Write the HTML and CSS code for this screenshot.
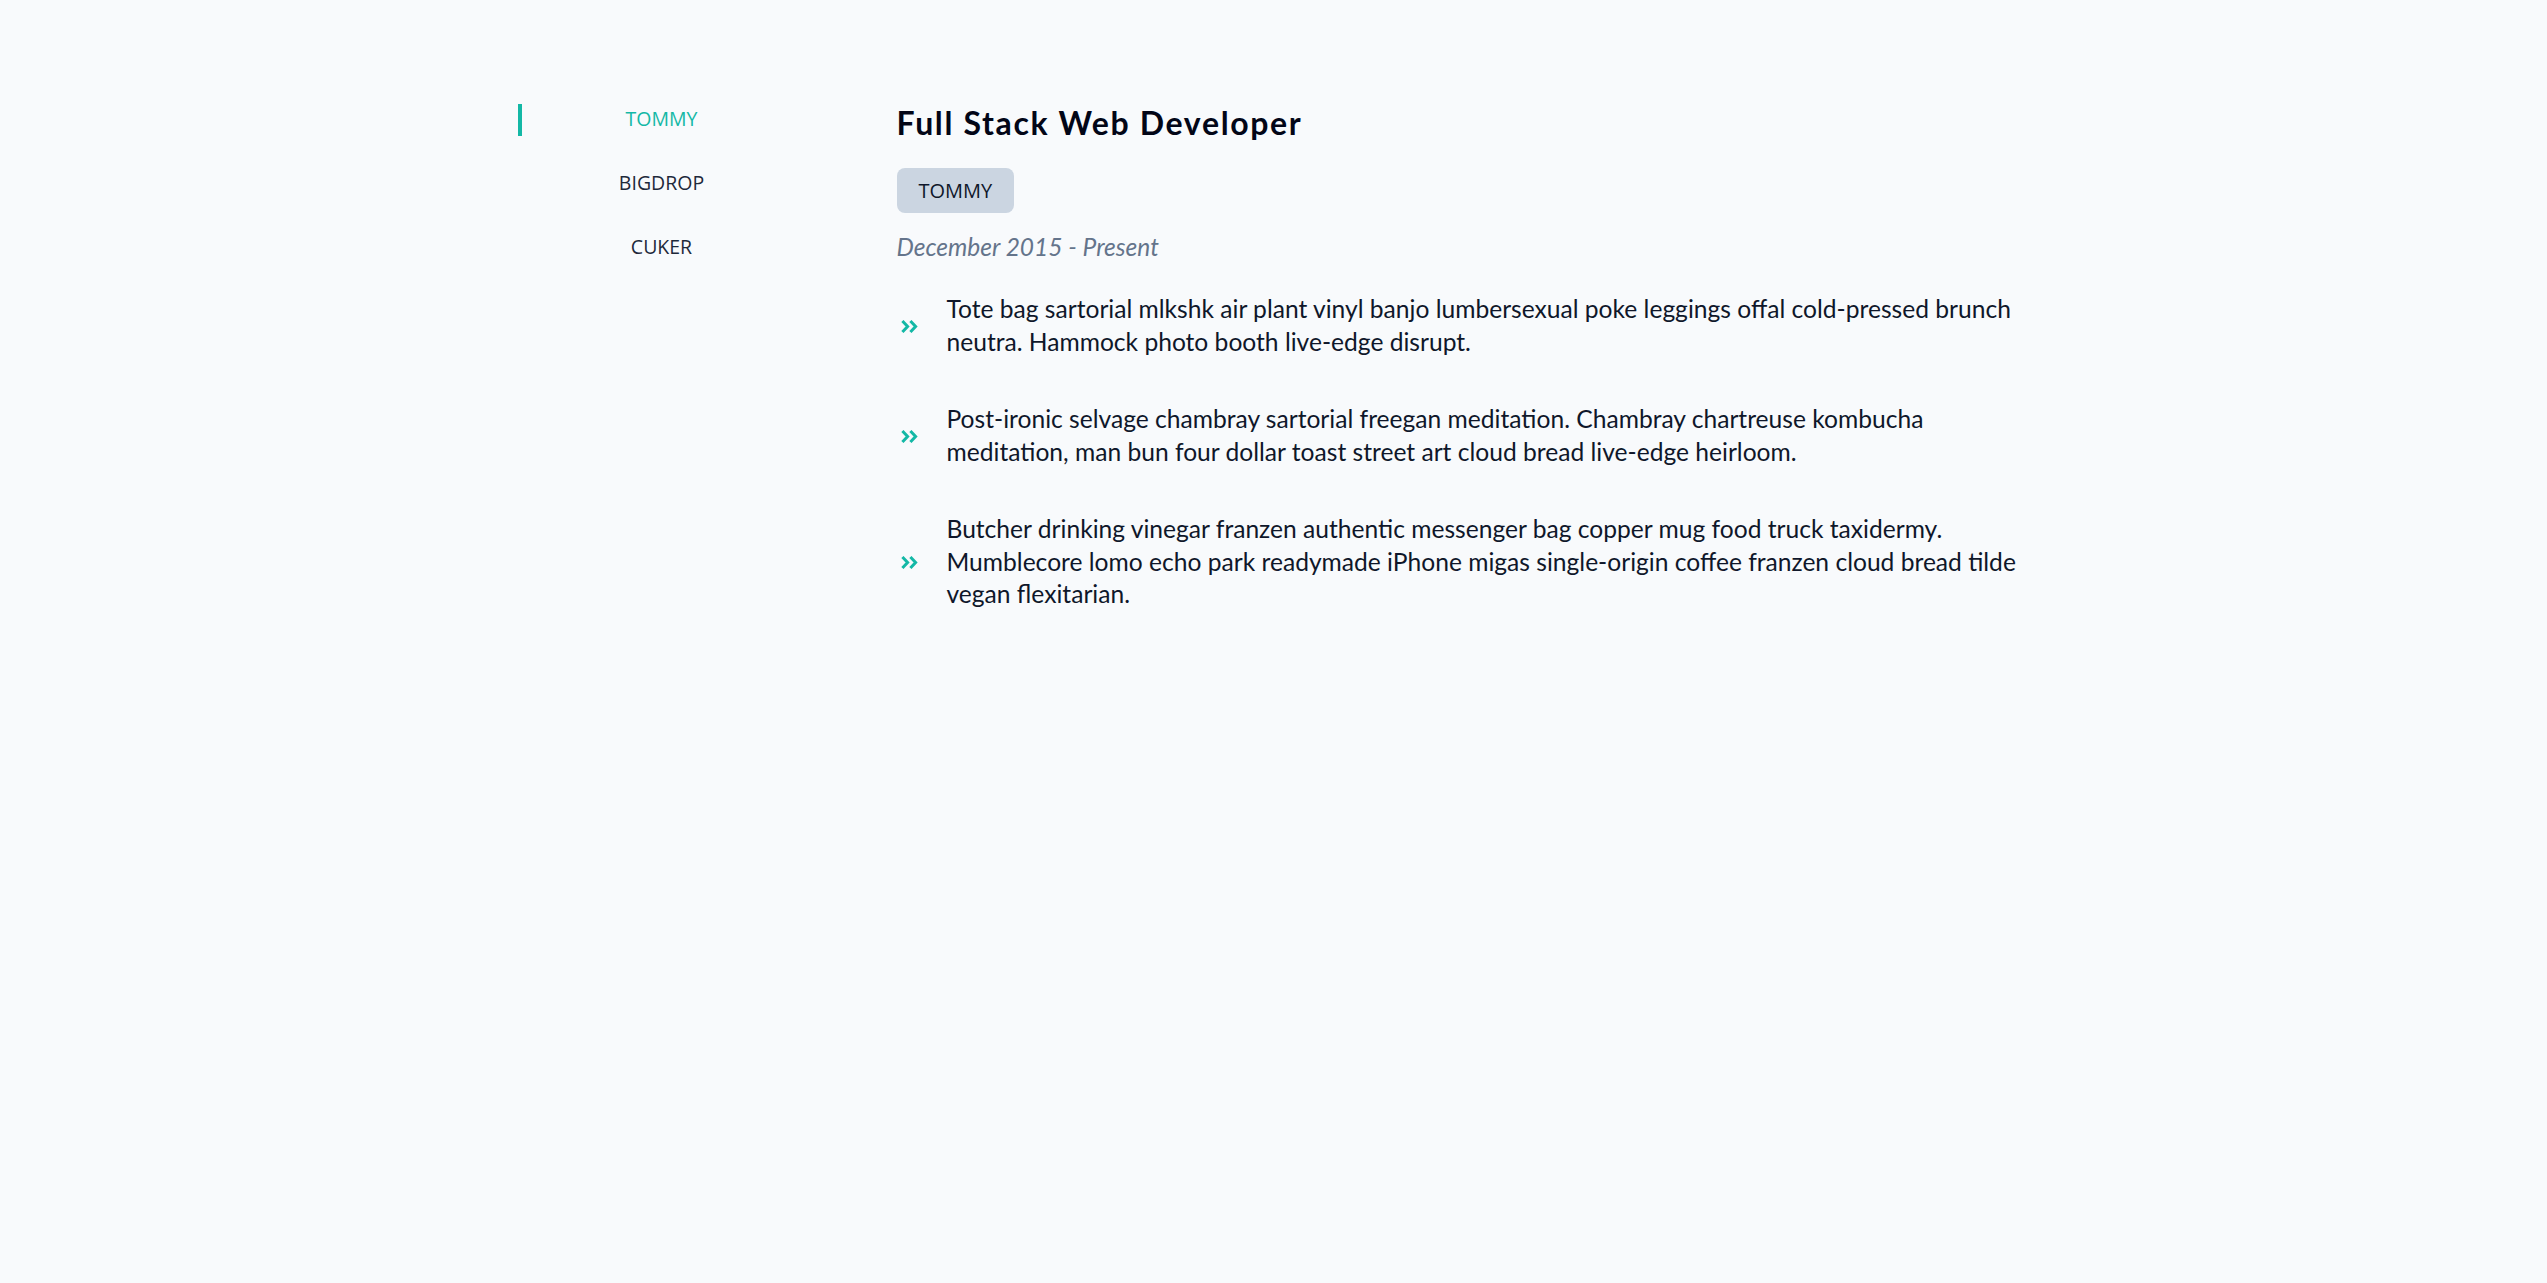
FILE: index.html
```html
<!DOCTYPE html>
<html lang="en">
<head>
<meta charset="utf-8">
<title>Experience</title>
<link rel="stylesheet" href="styles.css">
</head>
<body>
<div class="page">
  <nav class="sidebar">
    <div class="tab active">TOMMY</div>
    <div class="tab">BIGDROP</div>
    <div class="tab">CUKER</div>
  </nav>
  <main class="content">
    <h1 class="title">Full Stack Web Developer</h1>
    <div class="badge-row"><span class="badge">TOMMY</span></div>
    <p class="date">December 2015 - Present</p>
    <ul class="duties">
      <li class="duty">
        <span class="chev"><svg width="17" height="13" viewBox="0 0 17 13"><path d="M1.4 1 L6.6 6.5 L1.4 12 M9.4 1 L14.6 6.5 L9.4 12" fill="none" stroke="#14b8a6" stroke-width="3"/></svg></span>
        <span class="duty-text">Tote bag sartorial mlkshk air plant vinyl banjo lumbersexual poke leggings offal cold-pressed brunch neutra. Hammock photo booth live-edge disrupt.</span>
      </li>
      <li class="duty">
        <span class="chev"><svg width="17" height="13" viewBox="0 0 17 13"><path d="M1.4 1 L6.6 6.5 L1.4 12 M9.4 1 L14.6 6.5 L9.4 12" fill="none" stroke="#14b8a6" stroke-width="3"/></svg></span>
        <span class="duty-text">Post-ironic selvage chambray sartorial freegan meditation. Chambray chartreuse kombucha meditation, man bun four dollar toast street art cloud bread live-edge heirloom.</span>
      </li>
      <li class="duty">
        <span class="chev"><svg width="17" height="13" viewBox="0 0 17 13"><path d="M1.4 1 L6.6 6.5 L1.4 12 M9.4 1 L14.6 6.5 L9.4 12" fill="none" stroke="#14b8a6" stroke-width="3"/></svg></span>
        <span class="duty-text">Butcher drinking vinegar franzen authentic messenger bag copper mug food truck taxidermy. Mumblecore lomo echo park readymade iPhone migas single-origin coffee franzen cloud bread tilde vegan flexitarian.</span>
      </li>
    </ul>
  </main>
</div>
</body>
</html>
```
FILE: styles.css
```css
html, body {
  margin: 0;
  padding: 0;
  background: #f8fafc;
}
body {
  font-family: Lato, "Open Sans", sans-serif;
  color: #0f172a;
  min-height: 1283px;
}
.page {
  width: 1512px;
  margin: 0 auto;
  padding-top: 104px;
  display: flex;
  gap: 91px;
}
.sidebar {
  width: 288px;
  flex: none;
  display: flex;
  flex-direction: column;
  gap: 32px;
}
.tab {
  height: 32px;
  line-height: 30px;
  border-left: 4px solid transparent;
  text-align: center;
  font-family: "Open Sans", sans-serif;
  font-size: 19.5px;
  color: #1e293b;
  padding-right: 4px;
}
.tab.active {
  border-left-color: #14b8a6;
  color: #14b8a6;
}
.content {
  flex: 1;
  min-width: 0;
}
.title {
  margin: 0;
  font-size: 32px;
  line-height: 38px;
  font-weight: 700;
  letter-spacing: 1.65px;
  color: #020617;
}
.badge-row {
  margin-top: 26px;
  display: flex;
}
.badge {
  background: #cbd5e1;
  border-radius: 8px;
  padding: 8px 22px;
  line-height: 29px;
  font-family: "Open Sans", sans-serif;
  font-size: 20px;
  color: #0f172a;
}
.date {
  margin: 18px 0 0;
  font-size: 24.5px;
  line-height: 32px;
  font-style: italic;
  color: #64748b;
}
.duties {
  list-style: none;
  margin: 30px 0 0;
  padding: 0;
  display: flex;
  flex-direction: column;
  gap: 45px;
}
.duty {
  display: flex;
  align-items: center;
}
.chev {
  width: 50px;
  flex: none;
  display: flex;
  padding-left: 4px;
  padding-top: 1px;
  box-sizing: border-box;
}
.chev svg {
  display: block;
}
.duty-text {
  font-size: 24.6px;
  line-height: 32.5px;
  color: #0f172a;
}
```
